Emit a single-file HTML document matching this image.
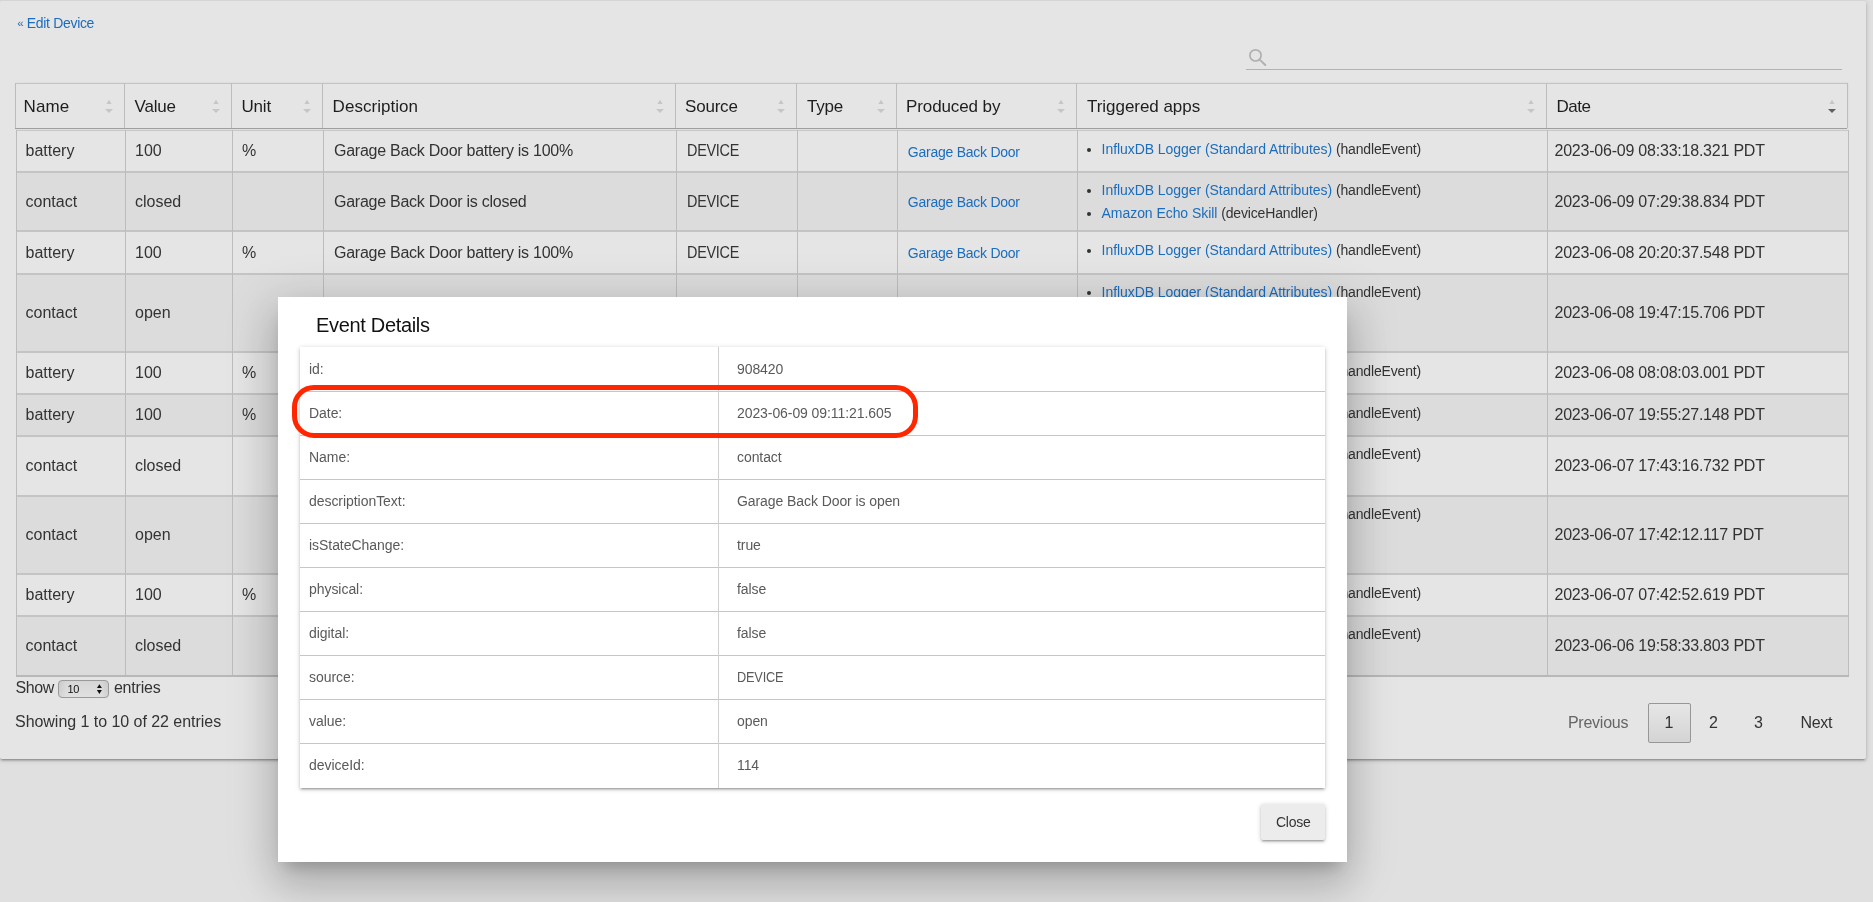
<!DOCTYPE html>
<html><head><meta charset="utf-8"><title>Device Events</title>
<style>
html,body{margin:0;padding:0}
body{width:1873px;height:902px;overflow:hidden;position:relative;background:#e0e0e0;font-family:"Liberation Sans", sans-serif}
.t{position:absolute;white-space:nowrap}
#root{position:absolute;left:0;top:0;width:1873px;height:902px;will-change:transform}
</style></head><body>
<div id="root">
<div id="card" style="position:absolute;left:0;top:1px;width:1866px;height:758px;border-radius:2px;background:#e5e5e5;box-shadow:0 2px 2px 0 rgba(0,0,0,0.14),0 3px 1px -2px rgba(0,0,0,0.12),0 1px 5px 0 rgba(0,0,0,0.2);"></div>
<div style="position:absolute;left:0;top:0;width:1865px;height:1px;background:#d5d5d5"></div>
<div class="t" style="left:17.2px;top:17.87px;font-size:11.5px;line-height:11.5px;letter-spacing:0px;color:#1c6dbd;">«</div>
<div class="t" style="left:26.8px;top:16.15px;font-size:14px;line-height:14px;letter-spacing:-0.32px;color:#1c6dbd;">Edit Device</div>
<svg style="position:absolute;left:1240px;top:45px" width="40" height="30" viewBox="1240 45 40 30"><circle cx="1255.5" cy="55.4" r="5.6" fill="none" stroke="#b0b0b0" stroke-width="1.7"/><line x1="1259.6" y1="59.6" x2="1265.3" y2="65" stroke="#b0b0b0" stroke-width="1.9" stroke-linecap="round"/></svg>
<div style="position:absolute;left:1246px;top:69px;width:596px;height:1px;background:#b2b2b2"></div>
<div style="position:absolute;left:15px;top:83px;width:1832px;height:44px;background:#e5e5e5;border-top:1px solid #c4c4c4;border-bottom:1px solid #9f9f9f;box-shadow:1px 0 2px rgba(0,0,0,0.08)"></div>
<div style="position:absolute;left:15px;top:83px;width:1px;height:45px;background:#bcbcbc"></div>
<div style="position:absolute;left:124px;top:83px;width:1px;height:45px;background:#bcbcbc"></div>
<div style="position:absolute;left:231px;top:83px;width:1px;height:45px;background:#bcbcbc"></div>
<div style="position:absolute;left:322px;top:83px;width:1px;height:45px;background:#bcbcbc"></div>
<div style="position:absolute;left:675px;top:83px;width:1px;height:45px;background:#bcbcbc"></div>
<div style="position:absolute;left:796px;top:83px;width:1px;height:45px;background:#bcbcbc"></div>
<div style="position:absolute;left:896px;top:83px;width:1px;height:45px;background:#bcbcbc"></div>
<div style="position:absolute;left:1076px;top:83px;width:1px;height:45px;background:#bcbcbc"></div>
<div style="position:absolute;left:1546px;top:83px;width:1px;height:45px;background:#bcbcbc"></div>
<div style="position:absolute;left:1847px;top:83px;width:1px;height:45px;background:#bcbcbc"></div>
<div class="t" style="left:23.6px;top:97.61px;font-size:17px;line-height:17px;letter-spacing:0.1px;color:#1e1e1e;">Name</div>
<svg style="position:absolute;left:102.5px;top:96px" width="12" height="20" viewBox="0 0 12 20"><polygon points="3.4,8 6,3.8 8.6,8" fill="#c6c6c6"/><polygon points="2,12.9 10,12.9 6,17.1" fill="#c6c6c6"/></svg>
<div class="t" style="left:134.5px;top:97.61px;font-size:17px;line-height:17px;letter-spacing:-0.2px;color:#1e1e1e;">Value</div>
<svg style="position:absolute;left:209.5px;top:96px" width="12" height="20" viewBox="0 0 12 20"><polygon points="3.4,8 6,3.8 8.6,8" fill="#c6c6c6"/><polygon points="2,12.9 10,12.9 6,17.1" fill="#c6c6c6"/></svg>
<div class="t" style="left:241.5px;top:97.61px;font-size:17px;line-height:17px;letter-spacing:-0.2px;color:#1e1e1e;">Unit</div>
<svg style="position:absolute;left:300.5px;top:96px" width="12" height="20" viewBox="0 0 12 20"><polygon points="3.4,8 6,3.8 8.6,8" fill="#c6c6c6"/><polygon points="2,12.9 10,12.9 6,17.1" fill="#c6c6c6"/></svg>
<div class="t" style="left:332.6px;top:97.61px;font-size:17px;line-height:17px;letter-spacing:0.04px;color:#1e1e1e;">Description</div>
<svg style="position:absolute;left:653.5px;top:96px" width="12" height="20" viewBox="0 0 12 20"><polygon points="3.4,8 6,3.8 8.6,8" fill="#c6c6c6"/><polygon points="2,12.9 10,12.9 6,17.1" fill="#c6c6c6"/></svg>
<div class="t" style="left:685px;top:97.61px;font-size:17px;line-height:17px;letter-spacing:-0.2px;color:#1e1e1e;">Source</div>
<svg style="position:absolute;left:774.5px;top:96px" width="12" height="20" viewBox="0 0 12 20"><polygon points="3.4,8 6,3.8 8.6,8" fill="#c6c6c6"/><polygon points="2,12.9 10,12.9 6,17.1" fill="#c6c6c6"/></svg>
<div class="t" style="left:807px;top:97.61px;font-size:17px;line-height:17px;letter-spacing:-0.2px;color:#1e1e1e;">Type</div>
<svg style="position:absolute;left:874.5px;top:96px" width="12" height="20" viewBox="0 0 12 20"><polygon points="3.4,8 6,3.8 8.6,8" fill="#c6c6c6"/><polygon points="2,12.9 10,12.9 6,17.1" fill="#c6c6c6"/></svg>
<div class="t" style="left:906px;top:97.61px;font-size:17px;line-height:17px;letter-spacing:-0.1px;color:#1e1e1e;">Produced by</div>
<svg style="position:absolute;left:1054.5px;top:96px" width="12" height="20" viewBox="0 0 12 20"><polygon points="3.4,8 6,3.8 8.6,8" fill="#c6c6c6"/><polygon points="2,12.9 10,12.9 6,17.1" fill="#c6c6c6"/></svg>
<div class="t" style="left:1087px;top:97.61px;font-size:17px;line-height:17px;letter-spacing:-0.04px;color:#1e1e1e;">Triggered apps</div>
<svg style="position:absolute;left:1524.5px;top:96px" width="12" height="20" viewBox="0 0 12 20"><polygon points="3.4,8 6,3.8 8.6,8" fill="#c6c6c6"/><polygon points="2,12.9 10,12.9 6,17.1" fill="#c6c6c6"/></svg>
<div class="t" style="left:1556.5px;top:97.61px;font-size:17px;line-height:17px;letter-spacing:-0.5px;color:#1e1e1e;">Date</div>
<svg style="position:absolute;left:1825.5px;top:96px" width="12" height="20" viewBox="0 0 12 20"><polygon points="3.4,8 6,3.8 8.6,8" fill="#c6c6c6"/><polygon points="2,12.9 10,12.9 6,17.1" fill="#606060"/></svg>
<div style="position:absolute;left:16px;top:130px;width:1832px;height:1px;background:#c8c8c8"></div>
<div style="position:absolute;left:16px;top:131px;width:1832px;height:40px;background:#e5e5e5"></div>
<div style="position:absolute;left:16px;top:171px;width:1832px;height:2px;background:#c4c4c4"></div>
<div class="t" style="left:25.5px;top:143.06px;font-size:16px;line-height:16px;letter-spacing:0px;color:#333333;">battery</div>
<div class="t" style="left:135px;top:143.06px;font-size:16px;line-height:16px;letter-spacing:0px;color:#333333;">100</div>
<div class="t" style="left:242px;top:143.06px;font-size:16px;line-height:16px;letter-spacing:0px;color:#333333;">%</div>
<div class="t" style="left:334px;top:143.06px;font-size:16px;line-height:16px;letter-spacing:-0.26px;color:#333333;">Garage Back Door battery is 100%</div>
<div class="t" style="left:687.2px;top:143.06px;font-size:16px;line-height:16px;letter-spacing:-0.3px;color:#333333;transform:scaleX(0.9);transform-origin:0 0;">DEVICE</div>
<div class="t" style="left:907.8px;top:144.65px;font-size:14px;line-height:14px;letter-spacing:-0.25px;color:#1c6dbd;">Garage Back Door</div>
<div style="position:absolute;left:1086.5px;top:148.1px;width:4px;height:4px;border-radius:2px;background:#333"></div>
<div class="t" style="left:1101.6px;top:141.75px;font-size:14px;line-height:14px;letter-spacing:-0.06px;color:#333333;"><span style="color:#1c6dbd">InfluxDB Logger (Standard Attributes)</span> <span style="color:#333333;letter-spacing:-0.15px">(handleEvent)</span></div>
<div class="t" style="left:1554.5px;top:143.06px;font-size:16px;line-height:16px;letter-spacing:-0.22px;color:#333333;">2023-06-09 08:33:18.321 PDT</div>
<div style="position:absolute;left:16px;top:173px;width:1832px;height:57px;background:#dcdcdc"></div>
<div style="position:absolute;left:16px;top:230px;width:1832px;height:2px;background:#c4c4c4"></div>
<div class="t" style="left:25.5px;top:193.56px;font-size:16px;line-height:16px;letter-spacing:0px;color:#333333;">contact</div>
<div class="t" style="left:135px;top:193.56px;font-size:16px;line-height:16px;letter-spacing:0px;color:#333333;">closed</div>
<div class="t" style="left:334px;top:193.56px;font-size:16px;line-height:16px;letter-spacing:-0.26px;color:#333333;">Garage Back Door is closed</div>
<div class="t" style="left:687.2px;top:193.56px;font-size:16px;line-height:16px;letter-spacing:-0.3px;color:#333333;transform:scaleX(0.9);transform-origin:0 0;">DEVICE</div>
<div class="t" style="left:907.8px;top:195.15px;font-size:14px;line-height:14px;letter-spacing:-0.25px;color:#1c6dbd;">Garage Back Door</div>
<div style="position:absolute;left:1086.5px;top:188.9px;width:4px;height:4px;border-radius:2px;background:#333"></div>
<div class="t" style="left:1101.6px;top:182.55px;font-size:14px;line-height:14px;letter-spacing:-0.06px;color:#333333;"><span style="color:#1c6dbd">InfluxDB Logger (Standard Attributes)</span> <span style="color:#333333;letter-spacing:-0.15px">(handleEvent)</span></div>
<div style="position:absolute;left:1086.5px;top:212.0px;width:4px;height:4px;border-radius:2px;background:#333"></div>
<div class="t" style="left:1101.6px;top:205.65px;font-size:14px;line-height:14px;letter-spacing:-0.06px;color:#333333;"><span style="color:#1c6dbd">Amazon Echo Skill</span> <span style="color:#333333;letter-spacing:-0.15px">(deviceHandler)</span></div>
<div class="t" style="left:1554.5px;top:193.56px;font-size:16px;line-height:16px;letter-spacing:-0.22px;color:#333333;">2023-06-09 07:29:38.834 PDT</div>
<div style="position:absolute;left:16px;top:232px;width:1832px;height:41px;background:#e5e5e5"></div>
<div style="position:absolute;left:16px;top:273px;width:1832px;height:2px;background:#c4c4c4"></div>
<div class="t" style="left:25.5px;top:244.56px;font-size:16px;line-height:16px;letter-spacing:0px;color:#333333;">battery</div>
<div class="t" style="left:135px;top:244.56px;font-size:16px;line-height:16px;letter-spacing:0px;color:#333333;">100</div>
<div class="t" style="left:242px;top:244.56px;font-size:16px;line-height:16px;letter-spacing:0px;color:#333333;">%</div>
<div class="t" style="left:334px;top:244.56px;font-size:16px;line-height:16px;letter-spacing:-0.26px;color:#333333;">Garage Back Door battery is 100%</div>
<div class="t" style="left:687.2px;top:244.56px;font-size:16px;line-height:16px;letter-spacing:-0.3px;color:#333333;transform:scaleX(0.9);transform-origin:0 0;">DEVICE</div>
<div class="t" style="left:907.8px;top:246.15px;font-size:14px;line-height:14px;letter-spacing:-0.25px;color:#1c6dbd;">Garage Back Door</div>
<div style="position:absolute;left:1086.5px;top:249.1px;width:4px;height:4px;border-radius:2px;background:#333"></div>
<div class="t" style="left:1101.6px;top:242.75px;font-size:14px;line-height:14px;letter-spacing:-0.06px;color:#333333;"><span style="color:#1c6dbd">InfluxDB Logger (Standard Attributes)</span> <span style="color:#333333;letter-spacing:-0.15px">(handleEvent)</span></div>
<div class="t" style="left:1554.5px;top:244.56px;font-size:16px;line-height:16px;letter-spacing:-0.22px;color:#333333;">2023-06-08 20:20:37.548 PDT</div>
<div style="position:absolute;left:16px;top:275px;width:1832px;height:76px;background:#dcdcdc"></div>
<div style="position:absolute;left:16px;top:351px;width:1832px;height:2px;background:#c4c4c4"></div>
<div class="t" style="left:25.5px;top:305.06px;font-size:16px;line-height:16px;letter-spacing:0px;color:#333333;">contact</div>
<div class="t" style="left:135px;top:305.06px;font-size:16px;line-height:16px;letter-spacing:0px;color:#333333;">open</div>
<div class="t" style="left:334px;top:305.06px;font-size:16px;line-height:16px;letter-spacing:-0.26px;color:#333333;">Garage Back Door is open</div>
<div class="t" style="left:687.2px;top:305.06px;font-size:16px;line-height:16px;letter-spacing:-0.3px;color:#333333;transform:scaleX(0.9);transform-origin:0 0;">DEVICE</div>
<div class="t" style="left:907.8px;top:306.65px;font-size:14px;line-height:14px;letter-spacing:-0.25px;color:#1c6dbd;">Garage Back Door</div>
<div style="position:absolute;left:1086.5px;top:290.9px;width:4px;height:4px;border-radius:2px;background:#333"></div>
<div class="t" style="left:1101.6px;top:284.55px;font-size:14px;line-height:14px;letter-spacing:-0.06px;color:#333333;"><span style="color:#1c6dbd">InfluxDB Logger (Standard Attributes)</span> <span style="color:#333333;letter-spacing:-0.15px">(handleEvent)</span></div>
<div style="position:absolute;left:1086.5px;top:314.0px;width:4px;height:4px;border-radius:2px;background:#333"></div>
<div class="t" style="left:1101.6px;top:307.65px;font-size:14px;line-height:14px;letter-spacing:-0.06px;color:#333333;"><span style="color:#1c6dbd">Amazon Echo Skill</span> <span style="color:#333333;letter-spacing:-0.15px">(deviceHandler)</span></div>
<div style="position:absolute;left:1086.5px;top:337.1px;width:4px;height:4px;border-radius:2px;background:#333"></div>
<div class="t" style="left:1101.6px;top:330.75px;font-size:14px;line-height:14px;letter-spacing:-0.06px;color:#333333;"><span style="color:#1c6dbd">Rule Machine</span> <span style="color:#333333;letter-spacing:-0.15px">(handler)</span></div>
<div class="t" style="left:1554.5px;top:305.06px;font-size:16px;line-height:16px;letter-spacing:-0.22px;color:#333333;">2023-06-08 19:47:15.706 PDT</div>
<div style="position:absolute;left:16px;top:353px;width:1832px;height:40px;background:#e5e5e5"></div>
<div style="position:absolute;left:16px;top:393px;width:1832px;height:2px;background:#c4c4c4"></div>
<div class="t" style="left:25.5px;top:365.06px;font-size:16px;line-height:16px;letter-spacing:0px;color:#333333;">battery</div>
<div class="t" style="left:135px;top:365.06px;font-size:16px;line-height:16px;letter-spacing:0px;color:#333333;">100</div>
<div class="t" style="left:242px;top:365.06px;font-size:16px;line-height:16px;letter-spacing:0px;color:#333333;">%</div>
<div class="t" style="left:334px;top:365.06px;font-size:16px;line-height:16px;letter-spacing:-0.26px;color:#333333;">Garage Back Door battery is 100%</div>
<div class="t" style="left:687.2px;top:365.06px;font-size:16px;line-height:16px;letter-spacing:-0.3px;color:#333333;transform:scaleX(0.9);transform-origin:0 0;">DEVICE</div>
<div class="t" style="left:907.8px;top:366.65px;font-size:14px;line-height:14px;letter-spacing:-0.25px;color:#1c6dbd;">Garage Back Door</div>
<div style="position:absolute;left:1086.5px;top:370.1px;width:4px;height:4px;border-radius:2px;background:#333"></div>
<div class="t" style="left:1101.6px;top:363.75px;font-size:14px;line-height:14px;letter-spacing:-0.06px;color:#333333;"><span style="color:#1c6dbd">InfluxDB Logger (Standard Attributes)</span> <span style="color:#333333;letter-spacing:-0.15px">(handleEvent)</span></div>
<div class="t" style="left:1554.5px;top:365.06px;font-size:16px;line-height:16px;letter-spacing:-0.22px;color:#333333;">2023-06-08 08:08:03.001 PDT</div>
<div style="position:absolute;left:16px;top:395px;width:1832px;height:40px;background:#dcdcdc"></div>
<div style="position:absolute;left:16px;top:435px;width:1832px;height:2px;background:#c4c4c4"></div>
<div class="t" style="left:25.5px;top:407.06px;font-size:16px;line-height:16px;letter-spacing:0px;color:#333333;">battery</div>
<div class="t" style="left:135px;top:407.06px;font-size:16px;line-height:16px;letter-spacing:0px;color:#333333;">100</div>
<div class="t" style="left:242px;top:407.06px;font-size:16px;line-height:16px;letter-spacing:0px;color:#333333;">%</div>
<div class="t" style="left:334px;top:407.06px;font-size:16px;line-height:16px;letter-spacing:-0.26px;color:#333333;">Garage Back Door battery is 100%</div>
<div class="t" style="left:687.2px;top:407.06px;font-size:16px;line-height:16px;letter-spacing:-0.3px;color:#333333;transform:scaleX(0.9);transform-origin:0 0;">DEVICE</div>
<div class="t" style="left:907.8px;top:408.65px;font-size:14px;line-height:14px;letter-spacing:-0.25px;color:#1c6dbd;">Garage Back Door</div>
<div style="position:absolute;left:1086.5px;top:412.1px;width:4px;height:4px;border-radius:2px;background:#333"></div>
<div class="t" style="left:1101.6px;top:405.75px;font-size:14px;line-height:14px;letter-spacing:-0.06px;color:#333333;"><span style="color:#1c6dbd">InfluxDB Logger (Standard Attributes)</span> <span style="color:#333333;letter-spacing:-0.15px">(handleEvent)</span></div>
<div class="t" style="left:1554.5px;top:407.06px;font-size:16px;line-height:16px;letter-spacing:-0.22px;color:#333333;">2023-06-07 19:55:27.148 PDT</div>
<div style="position:absolute;left:16px;top:437px;width:1832px;height:58px;background:#e5e5e5"></div>
<div style="position:absolute;left:16px;top:495px;width:1832px;height:2px;background:#c4c4c4"></div>
<div class="t" style="left:25.5px;top:458.06px;font-size:16px;line-height:16px;letter-spacing:0px;color:#333333;">contact</div>
<div class="t" style="left:135px;top:458.06px;font-size:16px;line-height:16px;letter-spacing:0px;color:#333333;">closed</div>
<div class="t" style="left:334px;top:458.06px;font-size:16px;line-height:16px;letter-spacing:-0.26px;color:#333333;">Garage Back Door is closed</div>
<div class="t" style="left:687.2px;top:458.06px;font-size:16px;line-height:16px;letter-spacing:-0.3px;color:#333333;transform:scaleX(0.9);transform-origin:0 0;">DEVICE</div>
<div class="t" style="left:907.8px;top:459.65px;font-size:14px;line-height:14px;letter-spacing:-0.25px;color:#1c6dbd;">Garage Back Door</div>
<div style="position:absolute;left:1086.5px;top:452.9px;width:4px;height:4px;border-radius:2px;background:#333"></div>
<div class="t" style="left:1101.6px;top:446.55px;font-size:14px;line-height:14px;letter-spacing:-0.06px;color:#333333;"><span style="color:#1c6dbd">InfluxDB Logger (Standard Attributes)</span> <span style="color:#333333;letter-spacing:-0.15px">(handleEvent)</span></div>
<div style="position:absolute;left:1086.5px;top:476.0px;width:4px;height:4px;border-radius:2px;background:#333"></div>
<div class="t" style="left:1101.6px;top:469.65px;font-size:14px;line-height:14px;letter-spacing:-0.06px;color:#333333;"><span style="color:#1c6dbd">Amazon Echo Skill</span> <span style="color:#333333;letter-spacing:-0.15px">(deviceHandler)</span></div>
<div class="t" style="left:1554.5px;top:458.06px;font-size:16px;line-height:16px;letter-spacing:-0.22px;color:#333333;">2023-06-07 17:43:16.732 PDT</div>
<div style="position:absolute;left:16px;top:497px;width:1832px;height:76px;background:#dcdcdc"></div>
<div style="position:absolute;left:16px;top:573px;width:1832px;height:2px;background:#c4c4c4"></div>
<div class="t" style="left:25.5px;top:527.06px;font-size:16px;line-height:16px;letter-spacing:0px;color:#333333;">contact</div>
<div class="t" style="left:135px;top:527.06px;font-size:16px;line-height:16px;letter-spacing:0px;color:#333333;">open</div>
<div class="t" style="left:334px;top:527.06px;font-size:16px;line-height:16px;letter-spacing:-0.26px;color:#333333;">Garage Back Door is open</div>
<div class="t" style="left:687.2px;top:527.06px;font-size:16px;line-height:16px;letter-spacing:-0.3px;color:#333333;transform:scaleX(0.9);transform-origin:0 0;">DEVICE</div>
<div class="t" style="left:907.8px;top:528.65px;font-size:14px;line-height:14px;letter-spacing:-0.25px;color:#1c6dbd;">Garage Back Door</div>
<div style="position:absolute;left:1086.5px;top:512.9px;width:4px;height:4px;border-radius:2px;background:#333"></div>
<div class="t" style="left:1101.6px;top:506.55px;font-size:14px;line-height:14px;letter-spacing:-0.06px;color:#333333;"><span style="color:#1c6dbd">InfluxDB Logger (Standard Attributes)</span> <span style="color:#333333;letter-spacing:-0.15px">(handleEvent)</span></div>
<div style="position:absolute;left:1086.5px;top:536.0px;width:4px;height:4px;border-radius:2px;background:#333"></div>
<div class="t" style="left:1101.6px;top:529.65px;font-size:14px;line-height:14px;letter-spacing:-0.06px;color:#333333;"><span style="color:#1c6dbd">Amazon Echo Skill</span> <span style="color:#333333;letter-spacing:-0.15px">(deviceHandler)</span></div>
<div style="position:absolute;left:1086.5px;top:559.1px;width:4px;height:4px;border-radius:2px;background:#333"></div>
<div class="t" style="left:1101.6px;top:552.75px;font-size:14px;line-height:14px;letter-spacing:-0.06px;color:#333333;"><span style="color:#1c6dbd">Rule Machine</span> <span style="color:#333333;letter-spacing:-0.15px">(handler)</span></div>
<div class="t" style="left:1554.5px;top:527.06px;font-size:16px;line-height:16px;letter-spacing:-0.22px;color:#333333;">2023-06-07 17:42:12.117 PDT</div>
<div style="position:absolute;left:16px;top:575px;width:1832px;height:40px;background:#e5e5e5"></div>
<div style="position:absolute;left:16px;top:615px;width:1832px;height:2px;background:#c4c4c4"></div>
<div class="t" style="left:25.5px;top:587.06px;font-size:16px;line-height:16px;letter-spacing:0px;color:#333333;">battery</div>
<div class="t" style="left:135px;top:587.06px;font-size:16px;line-height:16px;letter-spacing:0px;color:#333333;">100</div>
<div class="t" style="left:242px;top:587.06px;font-size:16px;line-height:16px;letter-spacing:0px;color:#333333;">%</div>
<div class="t" style="left:334px;top:587.06px;font-size:16px;line-height:16px;letter-spacing:-0.26px;color:#333333;">Garage Back Door battery is 100%</div>
<div class="t" style="left:687.2px;top:587.06px;font-size:16px;line-height:16px;letter-spacing:-0.3px;color:#333333;transform:scaleX(0.9);transform-origin:0 0;">DEVICE</div>
<div class="t" style="left:907.8px;top:588.65px;font-size:14px;line-height:14px;letter-spacing:-0.25px;color:#1c6dbd;">Garage Back Door</div>
<div style="position:absolute;left:1086.5px;top:592.1px;width:4px;height:4px;border-radius:2px;background:#333"></div>
<div class="t" style="left:1101.6px;top:585.75px;font-size:14px;line-height:14px;letter-spacing:-0.06px;color:#333333;"><span style="color:#1c6dbd">InfluxDB Logger (Standard Attributes)</span> <span style="color:#333333;letter-spacing:-0.15px">(handleEvent)</span></div>
<div class="t" style="left:1554.5px;top:587.06px;font-size:16px;line-height:16px;letter-spacing:-0.22px;color:#333333;">2023-06-07 07:42:52.619 PDT</div>
<div style="position:absolute;left:16px;top:617px;width:1832px;height:58px;background:#dcdcdc"></div>
<div style="position:absolute;left:16px;top:675px;width:1832px;height:2px;background:#c4c4c4"></div>
<div class="t" style="left:25.5px;top:638.06px;font-size:16px;line-height:16px;letter-spacing:0px;color:#333333;">contact</div>
<div class="t" style="left:135px;top:638.06px;font-size:16px;line-height:16px;letter-spacing:0px;color:#333333;">closed</div>
<div class="t" style="left:334px;top:638.06px;font-size:16px;line-height:16px;letter-spacing:-0.26px;color:#333333;">Garage Back Door is closed</div>
<div class="t" style="left:687.2px;top:638.06px;font-size:16px;line-height:16px;letter-spacing:-0.3px;color:#333333;transform:scaleX(0.9);transform-origin:0 0;">DEVICE</div>
<div class="t" style="left:907.8px;top:639.65px;font-size:14px;line-height:14px;letter-spacing:-0.25px;color:#1c6dbd;">Garage Back Door</div>
<div style="position:absolute;left:1086.5px;top:632.9px;width:4px;height:4px;border-radius:2px;background:#333"></div>
<div class="t" style="left:1101.6px;top:626.55px;font-size:14px;line-height:14px;letter-spacing:-0.06px;color:#333333;"><span style="color:#1c6dbd">InfluxDB Logger (Standard Attributes)</span> <span style="color:#333333;letter-spacing:-0.15px">(handleEvent)</span></div>
<div style="position:absolute;left:1086.5px;top:656.0px;width:4px;height:4px;border-radius:2px;background:#333"></div>
<div class="t" style="left:1101.6px;top:649.65px;font-size:14px;line-height:14px;letter-spacing:-0.06px;color:#333333;"><span style="color:#1c6dbd">Amazon Echo Skill</span> <span style="color:#333333;letter-spacing:-0.15px">(deviceHandler)</span></div>
<div class="t" style="left:1554.5px;top:638.06px;font-size:16px;line-height:16px;letter-spacing:-0.22px;color:#333333;">2023-06-06 19:58:33.803 PDT</div>
<div style="position:absolute;left:16px;top:130px;width:1px;height:547px;background:#bcbcbc"></div>
<div style="position:absolute;left:125px;top:130px;width:1px;height:547px;background:#bcbcbc"></div>
<div style="position:absolute;left:232px;top:130px;width:1px;height:547px;background:#bcbcbc"></div>
<div style="position:absolute;left:323px;top:130px;width:1px;height:547px;background:#bcbcbc"></div>
<div style="position:absolute;left:676px;top:130px;width:1px;height:547px;background:#bcbcbc"></div>
<div style="position:absolute;left:797px;top:130px;width:1px;height:547px;background:#bcbcbc"></div>
<div style="position:absolute;left:897px;top:130px;width:1px;height:547px;background:#bcbcbc"></div>
<div style="position:absolute;left:1077px;top:130px;width:1px;height:547px;background:#bcbcbc"></div>
<div style="position:absolute;left:1547px;top:130px;width:1px;height:547px;background:#bcbcbc"></div>
<div style="position:absolute;left:1848px;top:130px;width:1px;height:547px;background:#bcbcbc"></div>
<div style="position:absolute;left:16px;top:675px;width:1833px;height:2px;background:#b8b8b8"></div>
<div class="t" style="left:15.4px;top:679.96px;font-size:16px;line-height:16px;letter-spacing:-0.4px;color:#333333;">Show</div>
<div style="position:absolute;left:58px;top:680px;width:49px;height:16px;border:1px solid #9a9a9a;border-radius:4px;background:linear-gradient(90deg,rgba(0,0,0,0.06),rgba(0,0,0,0) 15%,rgba(0,0,0,0) 85%,rgba(0,0,0,0.06)),linear-gradient(#d6d6d6,#e0e0e0)"></div>
<div class="t" style="left:67.5px;top:683.69px;font-size:11px;line-height:11px;letter-spacing:-0.3px;color:#111;">10</div>
<svg style="position:absolute;left:95px;top:682px" width="8" height="14" viewBox="0 0 8 14"><polygon points="1.9,6 4.4,2.2 6.9,6" fill="#111"/><polygon points="1.9,8 6.9,8 4.4,12" fill="#111"/></svg>
<div class="t" style="left:113.9px;top:679.96px;font-size:16px;line-height:16px;letter-spacing:-0.2px;color:#333333;">entries</div>
<div class="t" style="left:15px;top:714.16px;font-size:16px;line-height:16px;letter-spacing:-0.04px;color:#333333;">Showing 1 to 10 of 22 entries</div>
<div class="t" style="left:1567.9px;top:714.66px;font-size:16px;line-height:16px;letter-spacing:-0.24px;color:#666666;">Previous</div>
<div style="position:absolute;left:1648px;top:703px;width:41px;height:38px;border:1px solid #979797;border-radius:2px;background:linear-gradient(#e6e6e6,#d4d4d4)"></div>
<div class="t" style="left:1664.5px;top:714.66px;font-size:16px;line-height:16px;letter-spacing:0px;color:#333333;">1</div>
<div class="t" style="left:1709px;top:714.66px;font-size:16px;line-height:16px;letter-spacing:0px;color:#333333;">2</div>
<div class="t" style="left:1754px;top:714.66px;font-size:16px;line-height:16px;letter-spacing:0px;color:#333333;">3</div>
<div class="t" style="left:1800.4px;top:714.66px;font-size:16px;line-height:16px;letter-spacing:-0.3px;color:#333333;">Next</div>
<div style="position:absolute;left:278px;top:297px;width:1069px;height:565px;background:#fff;box-shadow:0 24px 38px 3px rgba(0,0,0,0.14),0 9px 46px 8px rgba(0,0,0,0.12),0 11px 15px -7px rgba(0,0,0,0.2)"></div>
<div class="t" style="left:316px;top:315.27px;font-size:20px;line-height:20px;letter-spacing:-0.32px;color:#111111;">Event Details</div>
<div style="position:absolute;left:300px;top:347px;width:1025px;height:441px;background:#fff;box-shadow:0 2px 2px 0 rgba(0,0,0,0.14),0 3px 1px -2px rgba(0,0,0,0.12),0 1px 5px 0 rgba(0,0,0,0.2)"></div>
<div class="t" style="left:309px;top:361.95px;font-size:14px;line-height:14px;letter-spacing:-0.05px;color:#5a5a5a;">id:</div>
<div class="t" style="left:737px;top:361.95px;font-size:14px;line-height:14px;letter-spacing:-0.08px;color:#5a5a5a;">908420</div>
<div style="position:absolute;left:300px;top:391px;width:1025px;height:1px;background:#c6c6c6"></div>
<div class="t" style="left:309px;top:405.95px;font-size:14px;line-height:14px;letter-spacing:-0.05px;color:#5a5a5a;">Date:</div>
<div class="t" style="left:737px;top:405.95px;font-size:14px;line-height:14px;letter-spacing:-0.08px;color:#5a5a5a;">2023-06-09 09:11:21.605</div>
<div style="position:absolute;left:300px;top:435px;width:1025px;height:1px;background:#c6c6c6"></div>
<div class="t" style="left:309px;top:449.95px;font-size:14px;line-height:14px;letter-spacing:-0.05px;color:#5a5a5a;">Name:</div>
<div class="t" style="left:737px;top:449.95px;font-size:14px;line-height:14px;letter-spacing:-0.08px;color:#5a5a5a;">contact</div>
<div style="position:absolute;left:300px;top:479px;width:1025px;height:1px;background:#c6c6c6"></div>
<div class="t" style="left:309px;top:493.95px;font-size:14px;line-height:14px;letter-spacing:-0.05px;color:#5a5a5a;">descriptionText:</div>
<div class="t" style="left:737px;top:493.95px;font-size:14px;line-height:14px;letter-spacing:-0.08px;color:#5a5a5a;">Garage Back Door is open</div>
<div style="position:absolute;left:300px;top:523px;width:1025px;height:1px;background:#c6c6c6"></div>
<div class="t" style="left:309px;top:537.95px;font-size:14px;line-height:14px;letter-spacing:-0.05px;color:#5a5a5a;">isStateChange:</div>
<div class="t" style="left:737px;top:537.95px;font-size:14px;line-height:14px;letter-spacing:-0.08px;color:#5a5a5a;">true</div>
<div style="position:absolute;left:300px;top:567px;width:1025px;height:1px;background:#c6c6c6"></div>
<div class="t" style="left:309px;top:581.95px;font-size:14px;line-height:14px;letter-spacing:-0.05px;color:#5a5a5a;">physical:</div>
<div class="t" style="left:737px;top:581.95px;font-size:14px;line-height:14px;letter-spacing:-0.08px;color:#5a5a5a;">false</div>
<div style="position:absolute;left:300px;top:611px;width:1025px;height:1px;background:#c6c6c6"></div>
<div class="t" style="left:309px;top:625.95px;font-size:14px;line-height:14px;letter-spacing:-0.05px;color:#5a5a5a;">digital:</div>
<div class="t" style="left:737px;top:625.95px;font-size:14px;line-height:14px;letter-spacing:-0.08px;color:#5a5a5a;">false</div>
<div style="position:absolute;left:300px;top:655px;width:1025px;height:1px;background:#c6c6c6"></div>
<div class="t" style="left:309px;top:669.95px;font-size:14px;line-height:14px;letter-spacing:-0.05px;color:#5a5a5a;">source:</div>
<div class="t" style="left:737px;top:669.95px;font-size:14px;line-height:14px;letter-spacing:-0.2px;color:#5a5a5a;transform:scaleX(0.91);transform-origin:0 0;">DEVICE</div>
<div style="position:absolute;left:300px;top:699px;width:1025px;height:1px;background:#c6c6c6"></div>
<div class="t" style="left:309px;top:713.95px;font-size:14px;line-height:14px;letter-spacing:-0.05px;color:#5a5a5a;">value:</div>
<div class="t" style="left:737px;top:713.95px;font-size:14px;line-height:14px;letter-spacing:-0.08px;color:#5a5a5a;">open</div>
<div style="position:absolute;left:300px;top:743px;width:1025px;height:1px;background:#c6c6c6"></div>
<div class="t" style="left:309px;top:757.95px;font-size:14px;line-height:14px;letter-spacing:-0.05px;color:#5a5a5a;">deviceId:</div>
<div class="t" style="left:737px;top:757.95px;font-size:14px;line-height:14px;letter-spacing:-0.08px;color:#5a5a5a;">114</div>
<div style="position:absolute;left:718px;top:347px;width:1px;height:441px;background:#d0d0d0"></div>
<div style="position:absolute;left:1261px;top:804px;width:64px;height:36px;background:#ececec;border-radius:2px;box-shadow:0 2px 2px 0 rgba(0,0,0,0.14),0 3px 1px -2px rgba(0,0,0,0.12),0 1px 5px 0 rgba(0,0,0,0.2)"></div>
<div class="t" style="left:1275.9px;top:815.25px;font-size:14px;line-height:14px;letter-spacing:-0.2px;color:#333333;">Close</div>
<div style="position:absolute;left:292px;top:385px;width:615.5px;height:42.5px;border:5.5px solid #ff2600;border-radius:22px"></div>
</div>
</body></html>
